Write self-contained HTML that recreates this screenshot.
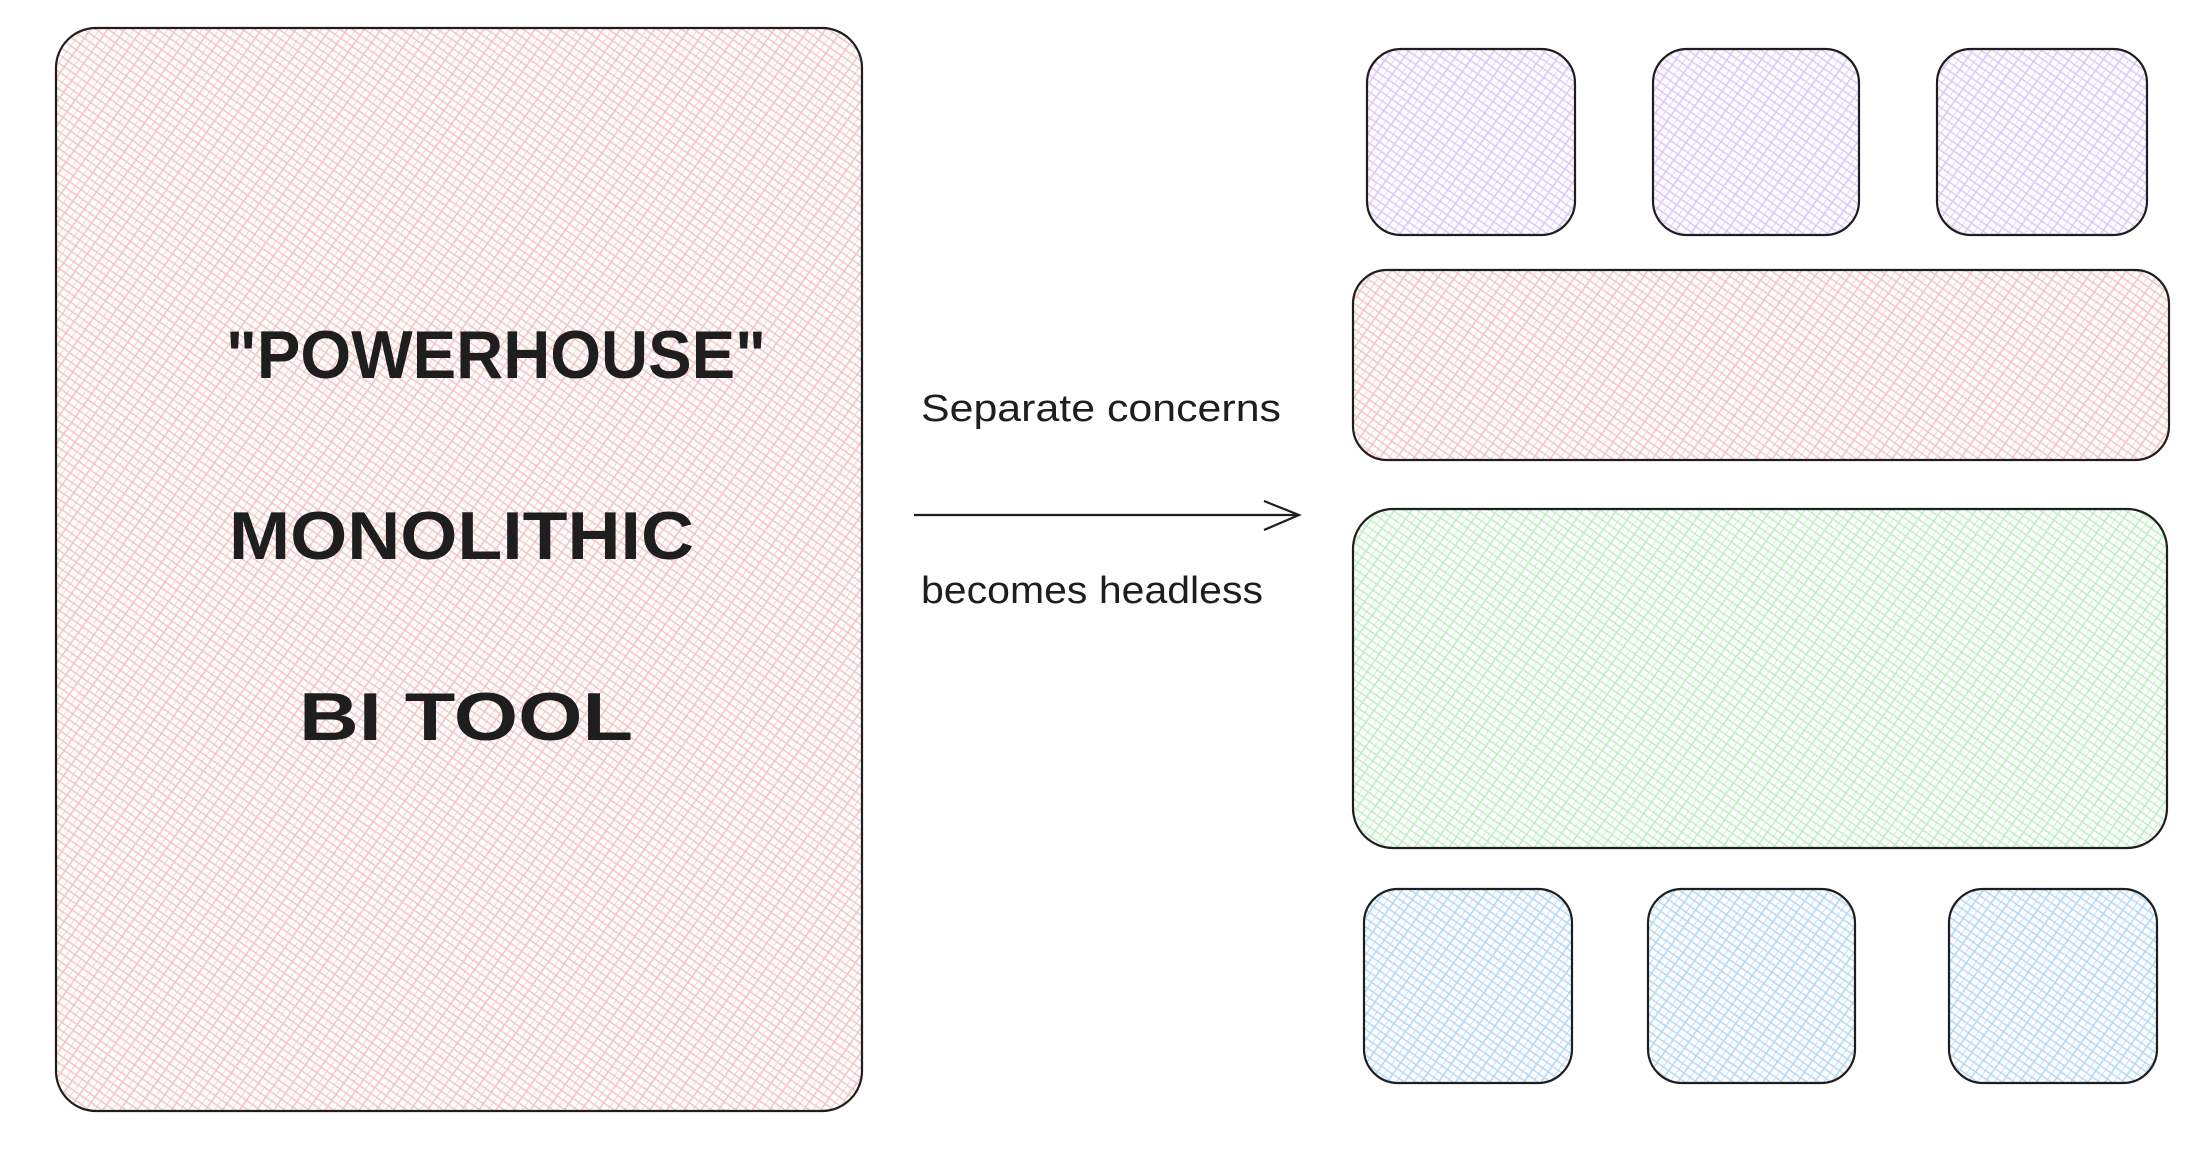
<!DOCTYPE html>
<html><head><meta charset="utf-8"><style>
html,body{margin:0;padding:0;background:#fff;width:2204px;height:1152px;overflow:hidden}
</style></head><body>
<svg width="2204" height="1152" viewBox="0 0 2204 1152" xmlns="http://www.w3.org/2000/svg">
<defs>
<pattern id="pk" width="14" height="14" patternUnits="userSpaceOnUse" patternTransform="rotate(35)">
<rect width="14" height="14" fill="#fff"/><path d="M0 0V14M7 0V14M0 4H14M0 11H14" stroke="#f5c4c4" stroke-width="1.6"/></pattern>
<pattern id="pu" width="14" height="14" patternUnits="userSpaceOnUse" patternTransform="rotate(35)">
<rect width="14" height="14" fill="#fff"/><path d="M0 0V14M7 0V14M0 4H14M0 11H14" stroke="#dcc8f8" stroke-width="1.6"/></pattern>
<pattern id="gr" width="14" height="14" patternUnits="userSpaceOnUse" patternTransform="rotate(35)">
<rect width="14" height="14" fill="#fff"/><path d="M0 0V14M7 0V14M0 4H14M0 11H14" stroke="#bdeec4" stroke-width="1.6"/></pattern>
<pattern id="bl" width="14" height="14" patternUnits="userSpaceOnUse" patternTransform="rotate(35)">
<rect width="14" height="14" fill="#fff"/><path d="M0 0V14M7 0V14M0 4H14M0 11H14" stroke="#b3d9f6" stroke-width="1.6"/></pattern>
</defs>
<g stroke="#1e1e1e" stroke-width="2.2">
<rect x="56" y="28" width="806" height="1083" rx="40" fill="url(#pk)"/>
<rect x="1367" y="49" width="208" height="186" rx="34" fill="url(#pu)"/>
<rect x="1653" y="49" width="206" height="186" rx="34" fill="url(#pu)"/>
<rect x="1937" y="49" width="210" height="186" rx="34" fill="url(#pu)"/>
<rect x="1353" y="270" width="816" height="190" rx="34" fill="url(#pk)"/>
<rect x="1353" y="509" width="814" height="339" rx="40" fill="url(#gr)"/>
<rect x="1364" y="889" width="208" height="194" rx="34" fill="url(#bl)"/>
<rect x="1648" y="889" width="207" height="194" rx="34" fill="url(#bl)"/>
<rect x="1949" y="889" width="208" height="194" rx="34" fill="url(#bl)"/>
</g>
<g font-family="Liberation Sans, sans-serif" font-weight="bold" fill="#1e1e1e" font-size="68">
<text x="226" y="378" textLength="540" lengthAdjust="spacingAndGlyphs">"POWERHOUSE"</text>
<text x="229" y="559" textLength="465" lengthAdjust="spacingAndGlyphs">MONOLITHIC</text>
<text x="299" y="740" textLength="334" lengthAdjust="spacingAndGlyphs">BI TOOL</text>
</g>
<g font-family="Liberation Sans, sans-serif" fill="#1e1e1e" font-size="38">
<text x="921" y="421" textLength="360" lengthAdjust="spacingAndGlyphs">Separate concerns</text>
<text x="921" y="603" textLength="342" lengthAdjust="spacingAndGlyphs">becomes headless</text>
</g>
<path d="M914 515H1299M1264 501L1299 515L1264 530" stroke="#1e1e1e" stroke-width="2.2" fill="none"/>
</svg>
</body></html>
